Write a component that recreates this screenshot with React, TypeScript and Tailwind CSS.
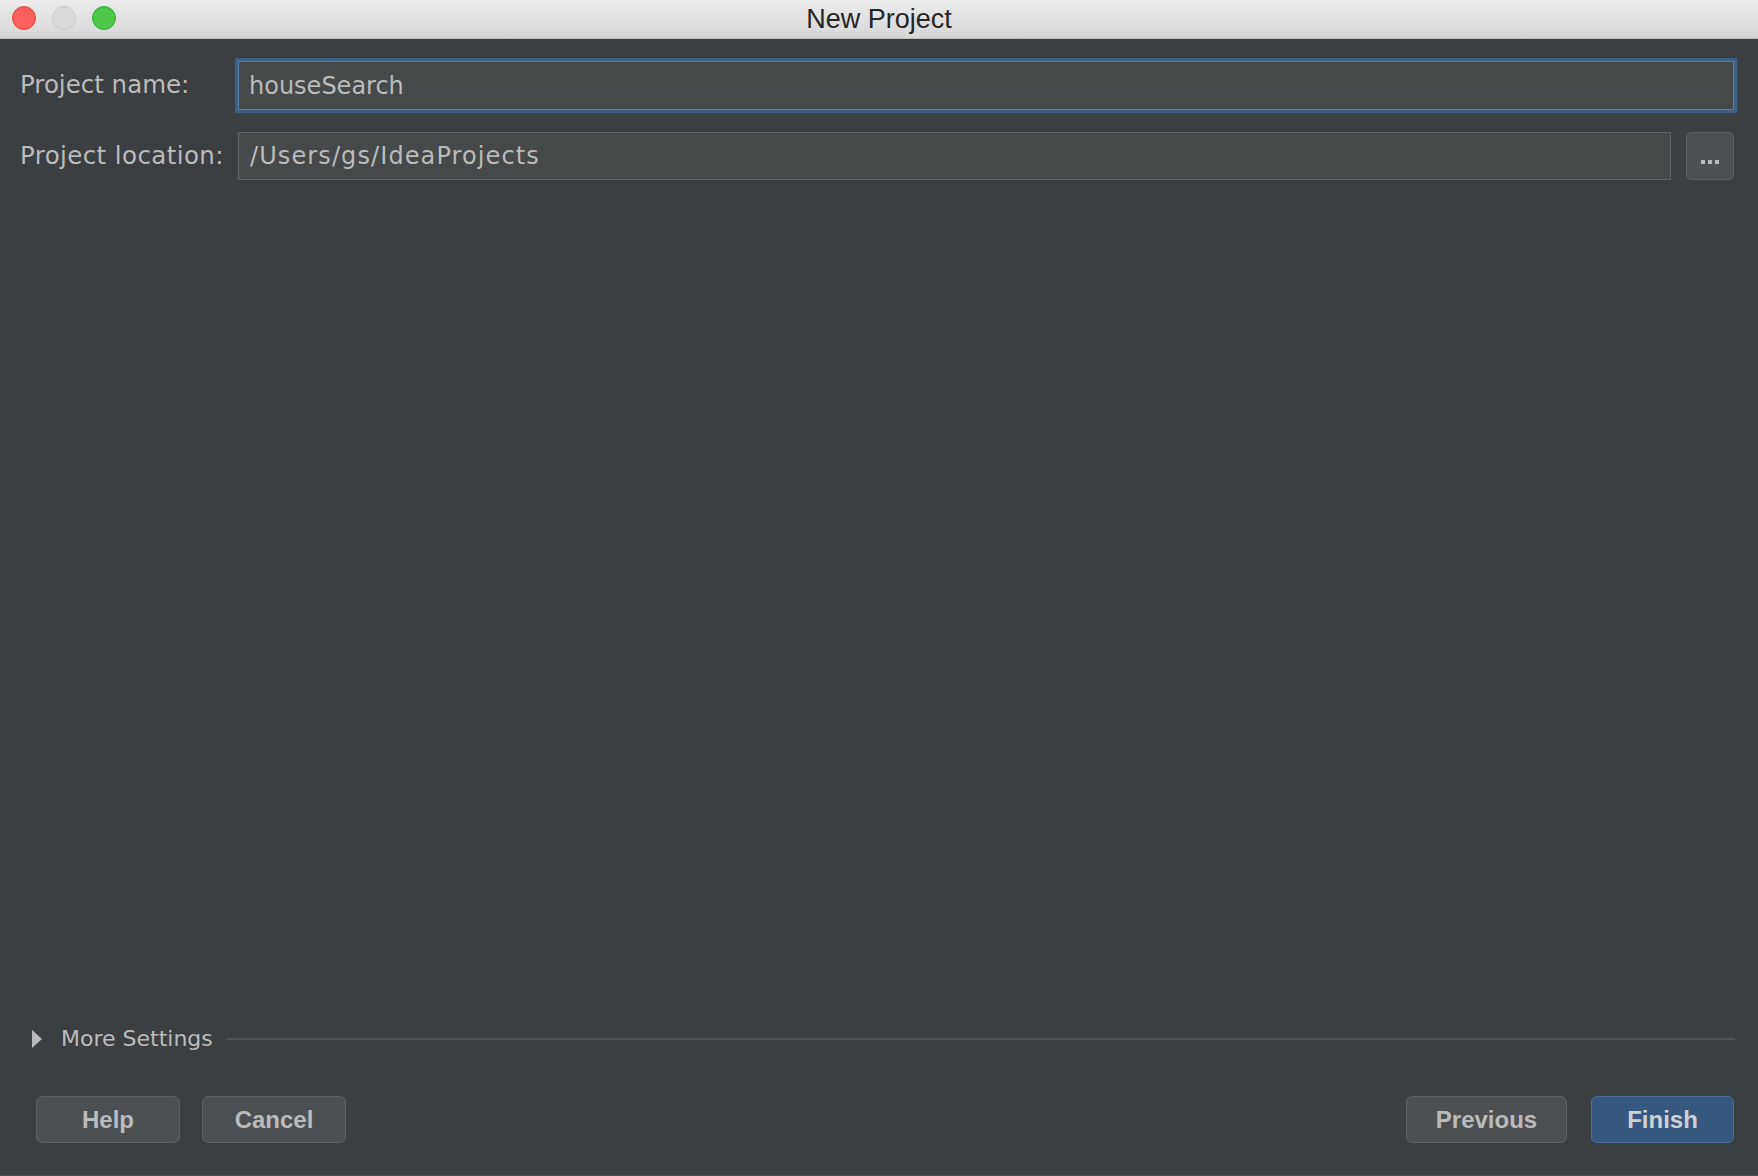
import React from "react";

const labelFont = { fontFamily: '"DejaVu Sans", "Open Sans", sans-serif' };
const uiFont = { fontFamily: '"Liberation Sans", Arial, sans-serif' };

function DialogButton({
  label,
  primary = false,
  width = "w-[144px]",
}: {
  label: string;
  primary?: boolean;
  width?: string;
}) {
  return (
    <button
      style={uiFont}
      className={
        (primary
          ? "bg-[#365880] border-[#4a6f97] text-[#d0d0d0] "
          : "bg-[#4c5052] border-[#5e6163] text-[#bbbbbb] ") +
        width +
        " h-[47px] rounded-[6px] border text-[24px] font-bold"
      }
    >
      {label}
    </button>
  );
}

export default function App() {
  return (
    <div className="flex h-screen w-full flex-col overflow-hidden bg-[#3c3f41]">
      {/* title bar */}
      <div className="relative flex h-[39px] items-center justify-center border-b border-[#b9b9b9] bg-gradient-to-b from-[#ececec] to-[#d6d6d6]">
        <div className="absolute left-[12px] top-[6px] flex gap-[16px]">
          <span className="h-[24px] w-[24px] rounded-full border border-[#e0443e] bg-[#fc605c]" />
          <span className="h-[24px] w-[24px] rounded-full border border-[#c8c8c8] bg-[#d9d9d9]" />
          <span className="h-[24px] w-[24px] rounded-full border border-[#2aac32] bg-[#4fc74b]" />
        </div>
        <p style={uiFont} className="text-[27px] text-[#262626]">
          New Project
        </p>
      </div>

      {/* form */}
      <div
        style={labelFont}
        className="grid grid-cols-[218px_1fr] items-center gap-y-[22px] pl-[20px] pr-[24px] pt-[22px] text-[24px] text-[#bbbbbb]"
      >
        <p className="text-[24.5px]">Project name:</p>
        <div className="flex h-[49px] items-center border border-[#5a7fa8] bg-[#45494a] px-[10px] shadow-[0_0_0_3px_#3d6185]">
          houseSearch
        </div>

        <p className="text-[24.5px] tracking-[0.4px]">Project location:</p>
        <div className="flex gap-[15px]">
          <div className="flex h-[48px] flex-1 items-center border border-[#646464] bg-[#45494a] px-[11px] tracking-[1.1px]">
            /Users/gs/IdeaProjects
          </div>
          <button className="flex h-[48px] w-[48px] items-end justify-center gap-[3px] rounded-[5px] border border-[#5e6163] bg-[#4c5052] pb-[15px]">
            <span className="h-[4px] w-[4px] bg-[#bbbbbb]" />
            <span className="h-[4px] w-[4px] bg-[#bbbbbb]" />
            <span className="h-[4px] w-[4px] bg-[#bbbbbb]" />
          </button>
        </div>
      </div>

      <div className="flex-1" />

      {/* more settings */}
      <div className="flex items-center pl-[32px] pr-[23px]">
        <svg width="10" height="18" viewBox="0 0 10 18" className="shrink-0">
          <path d="M0 0 L10 9 L0 18 Z" fill="#bbbbbb" />
        </svg>
        <span
          style={labelFont}
          className="ml-[19px] text-[22px] text-[#bbbbbb]"
        >
          More Settings
        </span>
        <div className="ml-[14px] h-[2px] flex-1 bg-[#4e5254]" />
      </div>

      {/* buttons */}
      <div className="mt-[41px] flex items-center pb-[32px] pl-[36px] pr-[24px]">
        <div className="flex gap-[22px]">
          <DialogButton label="Help" />
          <DialogButton label="Cancel" />
        </div>
        <div className="flex-1" />
        <div className="flex gap-[24px]">
          <DialogButton label="Previous" width="w-[161px]" />
          <DialogButton label="Finish" primary width="w-[143px]" />
        </div>
      </div>
      <div className="h-[1px] bg-[#4a4d4f]" />
    </div>
  );
}
